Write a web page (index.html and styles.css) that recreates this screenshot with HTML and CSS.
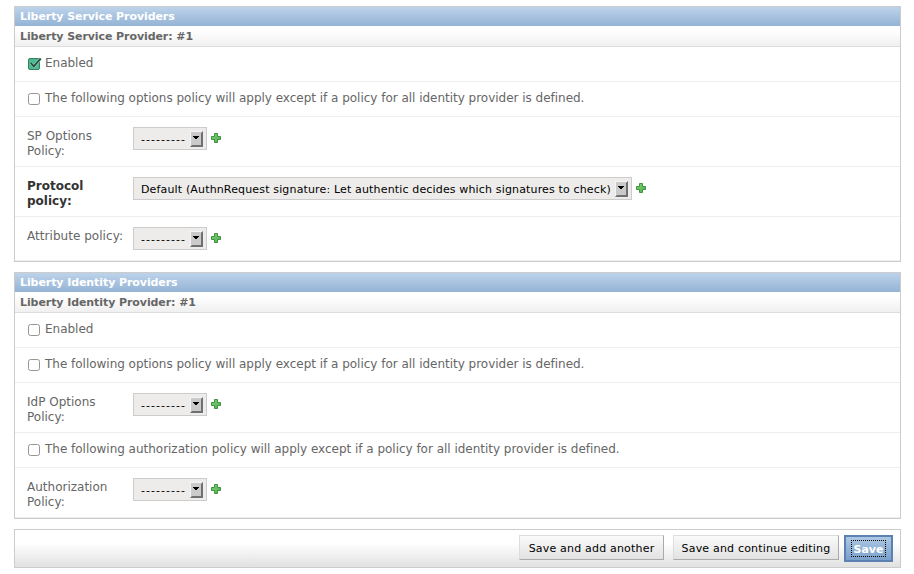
FILE: index.html
```html
<!DOCTYPE html>
<html lang="en">
<head>
<meta charset="utf-8">
<title>Liberty Providers</title>
<link rel="stylesheet" href="styles.css">
</head>
<body>
<svg class="defs" width="0" height="0">
  <defs>
    <linearGradient id="green" x1="0" y1="0" x2="1" y2="1"><stop offset="0" stop-color="#7fd67a"/><stop offset="1" stop-color="#4fa94b"/></linearGradient>
    <symbol id="plus" viewBox="0 0 10 10"><path d="M3.5.5h3v3h3v3h-3v3h-3v-3h-3v-3h3z" fill="url(#green)" stroke="#3f9440"/></symbol>
    <symbol id="arrow" viewBox="0 0 13 16"><path d="M0 0h13v16H0z" fill="#cacaca"/><path d="M0 0h13l-1 1H1v14l-1 1z" fill="#f4f4f4"/><path d="M13 0v16H0l2-2h9V2z" fill="#707070"/><path d="M3 5h6v1H8v1H7v1H5V7H4V6H3z" fill="#000"/></symbol>
  </defs>
</svg>
<main>
  <section class="module">
    <h2>Liberty Service Providers</h2>
    <h3>Liberty Service Provider: #1</h3>
    <div class="row check">
      <svg class="ticked" width="14" height="13" viewBox="0 0 14 13"><rect x=".5" y="1.5" width="11" height="11" rx="1.5" fill="#4dbb90" stroke="#397d62"/><path d="M3 6.5l3 2.8L12.7 1.5" fill="none" stroke="#8bd8b9" stroke-width="3"/><path d="M2.8 6l3 3.3L12.7 1.5" fill="none" stroke="#31473f" stroke-width="1.8"/></svg>
      <label>Enabled</label>
    </div>
    <div class="row check"><span class="box"></span><label>The following options policy will apply except if a policy for all identity provider is defined.</label></div>
    <div class="row field"><label>SP Options Policy:</label><div class="select"><span>---------</span><svg width="13" height="16"><use href="#arrow"/></svg></div><svg class="add" width="10" height="10"><use href="#plus"/></svg></div>
    <div class="row field required"><label>Protocol policy:</label><div class="select wide"><span>Default (AuthnRequest signature: Let authentic decides which signatures to check)</span><svg width="13" height="16"><use href="#arrow"/></svg></div><svg class="add" width="10" height="10"><use href="#plus"/></svg></div>
    <div class="row field short"><label>Attribute policy:</label><div class="select"><span>---------</span><svg width="13" height="16"><use href="#arrow"/></svg></div><svg class="add" width="10" height="10"><use href="#plus"/></svg></div>
  </section>
  <section class="module">
    <h2>Liberty Identity Providers</h2>
    <h3>Liberty Identity Provider: #1</h3>
    <div class="row check"><span class="box"></span><label>Enabled</label></div>
    <div class="row check"><span class="box"></span><label>The following options policy will apply except if a policy for all identity provider is defined.</label></div>
    <div class="row field"><label>IdP Options Policy:</label><div class="select"><span>---------</span><svg width="13" height="16"><use href="#arrow"/></svg></div><svg class="add" width="10" height="10"><use href="#plus"/></svg></div>
    <div class="row check"><span class="box"></span><label>The following authorization policy will apply except if a policy for all identity provider is defined.</label></div>
    <div class="row field"><label>Authorization Policy:</label><div class="select"><span>---------</span><svg width="13" height="16"><use href="#arrow"/></svg></div><svg class="add" width="10" height="10"><use href="#plus"/></svg></div>
  </section>
  <div class="submit">
    <button class="another">Save and add another</button>
    <button class="continue">Save and continue editing</button>
    <button class="save"><span>Save</span></button>
  </div>
</main>
</body>
</html>
```
FILE: styles.css
```css
* { box-sizing: border-box; }
body { margin: 0; background: #fff; color: #666; font: 12px/15px "DejaVu Sans", sans-serif; }
.defs { position: absolute; }
main { width: 887px; margin: 6px 0 0 14px; }
.module { border: 1px solid #ccc; margin-bottom: 10px; }
h2, h3 { margin: 0; padding-left: 5px; font-size: 11px; font-weight: bold; letter-spacing: -.08px; }
h2 { height: 19px; line-height: 19px; color: #fff; background: linear-gradient(#bdd3ea, #94b3d5); }
h3 { height: 21px; padding-top: 1px; line-height: 19px; color: #666; background: linear-gradient(#fff 20%, #f0f0f0); border-bottom: 1px solid #ddd; }
.row { display: flex; align-items: flex-start; border-bottom: 1px solid #eee; padding-left: 12px; }
.check { height: 35px; }
.check label { padding-top: 9px; white-space: nowrap; letter-spacing: -.02px; }
.box { width: 12px; height: 12px; margin: 11px 5px 0 1px; border: 1px solid #989690; border-radius: 2.5px; background: #fff; }
.ticked { margin: 10px 3px 0 1px; }
.field { height: 50px; }
.short { height: 44px; }
.field label { width: 106px; padding: 12px 8px 0 0; }
.short label { padding-right: 0; white-space: nowrap; letter-spacing: .04px; }
.required label { font-weight: bold; color: #333; }
.select { display: flex; justify-content: space-between; width: 74px; height: 23px; margin-top: 10px; padding: 3px 3px 0 7px; border: 1px solid #ccc; background: #edecea; color: #000; font-size: 11px; line-height: 16px; white-space: nowrap; letter-spacing: 1.03px; }
.select span { padding-top: 1px; }
.select svg { flex: none; }
.wide { width: 499px; letter-spacing: .153px; }
.add { margin: 16px 0 0 4px; }
.submit { display: flex; justify-content: flex-end; align-items: flex-start; height: 39px; padding: 5px 7px 0; border: 1px solid #ccc; background: linear-gradient(#fff 35%, #e1e1e1); }
button { height: 25px; margin: 0; padding: 1px 0 0; border: 1px solid; border-color: #ddd #aaa #aaa #ddd; background: linear-gradient(#fafafa, #e2e2e2); color: #000; font: 11px/15px "DejaVu Sans", sans-serif; white-space: nowrap; letter-spacing: .19px; }
.another { width: 145px; margin-right: 9px; }
.continue { width: 166px; margin-right: 5px; }
.save { width: 49px; height: 27px; padding: 0; border: 2px solid #5b80b2; background: linear-gradient(#adc8e3, #79a0cb); color: #fff; font-weight: bold; letter-spacing: 0; }
.save span { display: block; width: 35px; height: 17px; margin: 0 auto; border: 1px dotted #000; line-height: 17px; }
```
